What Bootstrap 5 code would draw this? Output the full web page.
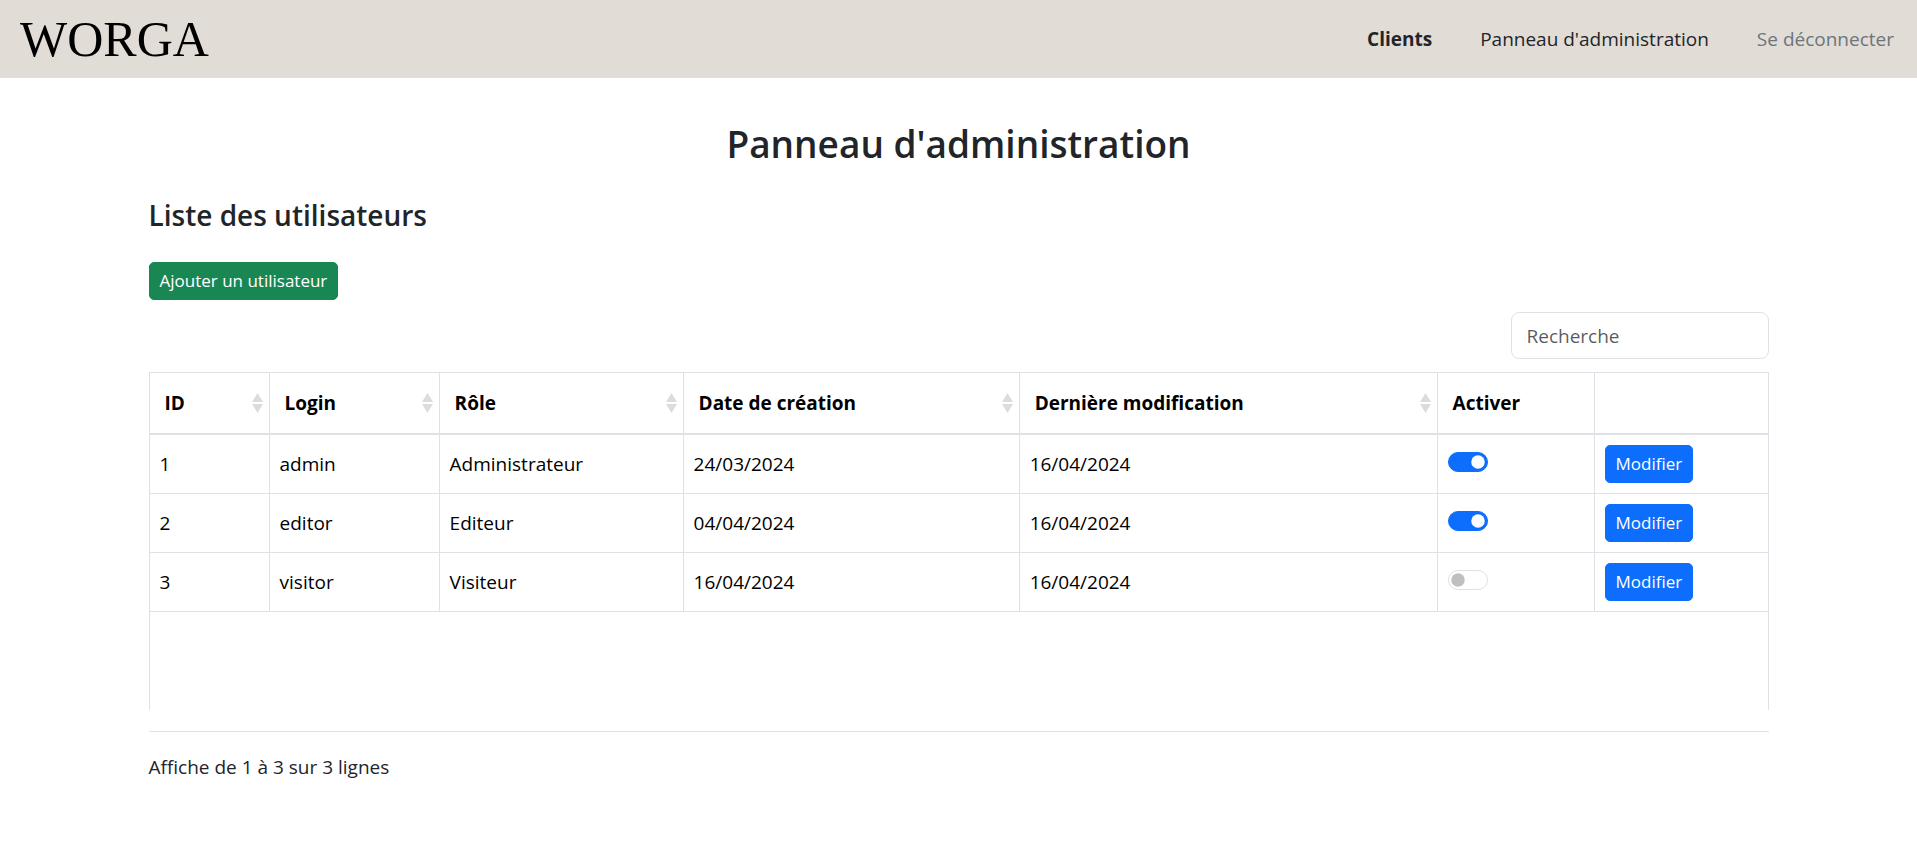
<!DOCTYPE html>
<html lang="fr">
<head>
<meta charset="utf-8">
<meta name="viewport" content="width=device-width, initial-scale=1">
<title>Worga - Panneau d'administration</title>
<link href="https://cdn.jsdelivr.net/npm/bootstrap@5.3.0/dist/css/bootstrap.min.css" rel="stylesheet">
<style>
  html { font-size: 20px; }
  body { font-family: "Open Sans", "Noto Sans", sans-serif; font-size: 19px; line-height: 30px; }
  .topbar { background: #e1dcd6; height: 78px; }
  .brand { font-family: "Liberation Serif", serif; font-size: 50px; line-height: 58px; color: #000; }
  .topnav { gap: 48px; padding-right: 23px; }
  .admin { max-width: 1650px; padding-top: 42px; }
  .page-title { font-size: 37px; line-height: 48px; font-weight: 600; margin-bottom: 29px; }
  .section-title { font-size: 28px; line-height: 36px; font-weight: 600; margin-bottom: 29px; }
  .btn-sm { font-size: 17px; line-height: 26px; border-radius: 5px; }
  .search { width: 258px; margin: 12px 0 13px; }
  .search .form-control { font-size: 19px; line-height: 30px; border-radius: 8px; }
  .users-box { height: 338px; border: 1px solid #dee2e6; border-width: 0 1px; overflow: auto; }
  .users { table-layout: fixed; border-collapse: separate; border-spacing: 0; }
  .users th, .users td { color: #000; border: 0 solid #dee2e6; border-width: 0 1px 1px 0; }
  .users th:last-child, .users td:last-child { border-right-width: 0; }
  .users th { border-top-width: 1px; border-bottom-width: 2px; padding: 15px; padding-right: 6px; height: 63px; }
  .users td { padding: 10px; height: 59px; }
  .sort { width: 11px; height: 20px; fill: #dcdcdc; }
  .users .form-check-input { width: 40px; height: 20px; margin-top: 0; }
  .users .form-switch { min-height: 24px; padding-left: 40px; }
  .users .form-switch .form-check-input { margin-left: -40px; }
  .table-foot { margin-top: 21px; padding-top: 20px; }
</style>
</head>
<body>
<header class="topbar d-flex align-items-center justify-content-between">
  <a class="brand text-decoration-none ms-3" href="#">WORGA</a>
  <nav class="topnav d-flex">
    <a class="text-body text-decoration-none fw-bold" href="#">Clients</a>
    <a class="text-body text-decoration-none" href="#">Panneau d'administration</a>
    <a class="text-secondary text-decoration-none" href="#">Se déconnecter</a>
  </nav>
</header>
<main class="container admin">
  <h1 class="page-title text-center">Panneau d'administration</h1>
  <h2 class="section-title">Liste des utilisateurs</h2>
  <button type="button" class="btn btn-success btn-sm d-block">Ajouter un utilisateur</button>
  <div class="search ms-auto"><input type="search" class="form-control" placeholder="Recherche" aria-label="Recherche"></div>
  <div class="users-box">
    <table class="users w-100">
      <colgroup><col style="width:7.42%"><col style="width:10.51%"><col style="width:15.08%"><col style="width:20.77%"><col style="width:25.83%"><col style="width:9.7%"><col style="width:10.69%"></colgroup>
      <thead>
        <tr>
          <th scope="col"><div class="d-flex justify-content-between align-items-center">ID<svg class="sort" viewBox="0 0 11 20" aria-hidden="true"><path d="M5.500 0L11 9H0zM0 11h11L5.500 20z"/></svg></div></th>
          <th scope="col"><div class="d-flex justify-content-between align-items-center">Login<svg class="sort" viewBox="0 0 11 20" aria-hidden="true"><path d="M5.500 0L11 9H0zM0 11h11L5.500 20z"/></svg></div></th>
          <th scope="col"><div class="d-flex justify-content-between align-items-center">Rôle<svg class="sort" viewBox="0 0 11 20" aria-hidden="true"><path d="M5.500 0L11 9H0zM0 11h11L5.500 20z"/></svg></div></th>
          <th scope="col"><div class="d-flex justify-content-between align-items-center">Date de création<svg class="sort" viewBox="0 0 11 20" aria-hidden="true"><path d="M5.500 0L11 9H0zM0 11h11L5.500 20z"/></svg></div></th>
          <th scope="col"><div class="d-flex justify-content-between align-items-center">Dernière modification<svg class="sort" viewBox="0 0 11 20" aria-hidden="true"><path d="M5.500 0L11 9H0zM0 11h11L5.500 20z"/></svg></div></th>
          <th scope="col">Activer</th>
          <th scope="col"></th>
        </tr>
      </thead>
      <tbody>
        <tr><td>1</td><td>admin</td><td>Administrateur</td><td>24/03/2024</td><td>16/04/2024</td><td><div class="form-check form-switch mb-0"><input class="form-check-input" type="checkbox" role="switch" aria-label="Activer admin" checked></div></td><td><button type="button" class="btn btn-primary btn-sm d-block">Modifier</button></td></tr>
        <tr><td>2</td><td>editor</td><td>Editeur</td><td>04/04/2024</td><td>16/04/2024</td><td><div class="form-check form-switch mb-0"><input class="form-check-input" type="checkbox" role="switch" aria-label="Activer editor" checked></div></td><td><button type="button" class="btn btn-primary btn-sm d-block">Modifier</button></td></tr>
        <tr><td>3</td><td>visitor</td><td>Visiteur</td><td>16/04/2024</td><td>16/04/2024</td><td><div class="form-check form-switch mb-0"><input class="form-check-input" type="checkbox" role="switch" aria-label="Activer visitor"></div></td><td><button type="button" class="btn btn-primary btn-sm d-block">Modifier</button></td></tr>
      </tbody>
    </table>
  </div>
  <div class="table-foot border-top">Affiche de 1 à 3 sur 3 lignes</div>
</main>
<script src="https://cdn.jsdelivr.net/npm/bootstrap@5.3.0/dist/js/bootstrap.bundle.min.js"></script>
</body>
</html>
